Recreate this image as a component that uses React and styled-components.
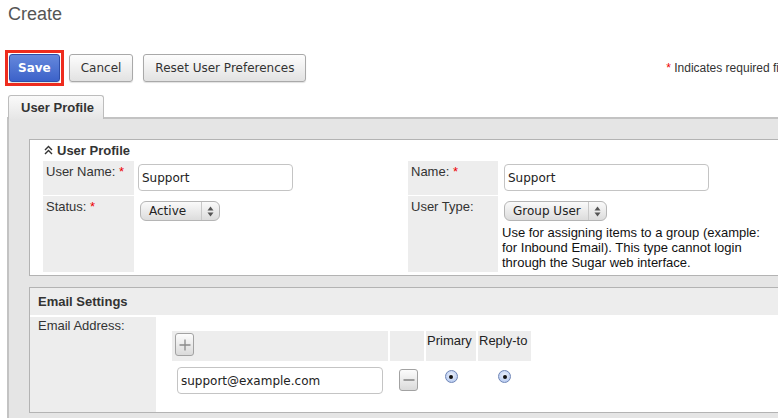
import React from "react";
import styled, { createGlobalStyle } from "styled-components";

const GlobalStyle = createGlobalStyle`
  html, body {
    margin: 0;
    padding: 0;
    background: #fff;
    overflow: hidden;
  }
  body {
    font-family: "Liberation Sans", Arial, sans-serif;
    font-size: 13px;
    color: #333;
  }
`;

const Page = styled.div`
  width: 803px;
  height: 418px;
  overflow: hidden;
`;

const Title = styled.h1`
  margin: 0;
  padding: 4px 0 0 8px;
  height: 50px;
  box-sizing: border-box;
  font-size: 18px;
  font-weight: normal;
  line-height: 20px;
  color: #555;
`;

const ButtonBar = styled.div`
  display: flex;
  align-items: center;
  padding-left: 5px;
`;

const Highlight = styled.div`
  border: 3px solid #ee2c1e;
  padding: 1px;
  margin-right: 5px;
  display: flex;
`;

const Button = styled.button`
  height: 28px;
  padding: 0 ${(p) => (p.$primary ? "8px" : "11px")};
  margin-right: ${(p) => p.$gap || 0}px;
  border-radius: 3px;
  border: 1px solid ${(p) => (p.$primary ? "#2f4fa8" : "#a9a9a9")};
  background: ${(p) =>
    p.$primary
      ? "linear-gradient(#6588dc, #3c62c9)"
      : "linear-gradient(#fdfdfd, #e2e2e2)"};
  color: ${(p) => (p.$primary ? "#fff" : "#333")};
  font-family: "DejaVu Sans", Verdana, sans-serif;
  font-size: 12px;
  font-weight: ${(p) => (p.$primary ? "bold" : "normal")};
  box-shadow: 0 1px 1px rgba(0, 0, 0, 0.12);
`;

const RequiredNote = styled.div`
  margin-left: auto;
  padding-right: 8px;
  font-size: 12px;
  color: #333;
  white-space: nowrap;
`;

const Star = styled.span`
  color: #e00;
`;

const TabBar = styled.div`
  display: flex;
  padding: 9px 0 0 8px;
`;

const Tab = styled.div`
  width: 96px;
  height: 24px;
  box-sizing: border-box;
  padding: 4px 0 0 12px;
  border: 1px solid #bdbdbd;
  border-bottom: none;
  border-radius: 3px 3px 0 0;
  background: linear-gradient(#fafafa, #e6e6e6);
  font-weight: bold;
  color: #333;
  margin-bottom: -2px;
  position: relative;
`;

const TabPanel = styled.div`
  margin-left: 7px;
  border-top: 2px solid #c3c3c3;
  border-left: 2px solid #c3c3c3;
  background: #e5e5e5;
  padding: 20px 0 0 20px;
  height: 300px;
`;

const Section = styled.div`
  background: #fff;
  border: 1px solid #b3b3b3;
  margin-bottom: ${(p) => p.$mb || 0}px;
`;

const SectionHead = styled.div`
  display: flex;
  align-items: center;
  gap: 4px;
  height: 20px;
  padding: 0 0 1px 14px;
  font-weight: bold;
  color: #333;
`;

const ProfileGrid = styled.div`
  display: grid;
  grid-template-columns: 91px 266px 90px 1fr;
  grid-template-rows: 34px 76px;
  column-gap: 4px;
  row-gap: 1px;
  padding: 0 0 3px 13px;
`;

const Label = styled.div`
  background: #ededed;
  padding: 3px 3px;
  color: #333;
  white-space: nowrap;
`;

const Field = styled.div`
  padding-top: ${(p) => p.$top || 3}px;
  padding-left: ${(p) => p.$left || 0}px;
`;

const TextInput = styled.input`
  display: block;
  width: ${(p) => p.$w}px;
  height: 27px;
  box-sizing: border-box;
  border: 1px solid #c4c4c4;
  border-radius: 4px;
  padding: 0 3px;
  font-family: "DejaVu Sans", Verdana, sans-serif;
  font-size: 12px;
  color: #222;
  outline: none;
  background: #fff;
`;

const Select = styled.div`
  display: flex;
  align-items: center;
  width: ${(p) => p.$w}px;
  height: 20px;
  box-sizing: border-box;
  border: 1px solid #b5b5b5;
  border-radius: 6px;
  background: linear-gradient(#fafafa, #dcdcdc);
  font-family: "DejaVu Sans", Verdana, sans-serif;
  font-size: 12px;
  color: #222;
  margin-left: ${(p) => p.$ml || 0}px;
`;

const SelectText = styled.span`
  flex: 1;
  padding-left: 8px;
`;

const SelectArrows = styled.span`
  width: 17px;
  height: 100%;
  border-left: 1px solid #c8c8c8;
  display: flex;
  align-items: center;
  justify-content: center;
`;

const Help = styled.div`
  width: 268px;
  margin-top: 4px;
  line-height: 15px;
  color: #111;
`;

const EmailHead = styled.div`
  height: 27px;
  line-height: 27px;
  background: #ededed;
  padding-left: 8px;
  font-weight: bold;
  color: #333;
`;

const EmailRow = styled.div`
  display: flex;
  margin-top: 2px;
`;

const EmailLabel = styled.div`
  width: 126px;
  min-height: 95px;
  box-sizing: border-box;
  background: #ededed;
  padding: 1px 8px;
  color: #333;
`;

const EmailTable = styled.div`
  display: grid;
  grid-template-columns: 216px 34px 50px 53px;
  grid-template-rows: 30px 36px;
  column-gap: 2px;
  margin: 14px 0 0 16px;
`;

const HeadCell = styled.div`
  background: #ededed;
  padding: ${(p) => (p.$btn ? "2px 0 0 3px" : "2px 0 0 1px")};
  color: #222;
  white-space: nowrap;
`;

const Cell = styled.div`
  display: flex;
  justify-content: ${(p) => (p.$center ? "center" : "flex-start")};
  align-items: flex-start;
  padding: ${(p) => p.$pad || "0"};
`;

const IconButton = styled.span`
  display: flex;
  align-items: center;
  justify-content: center;
  width: 19px;
  height: ${(p) => p.$h}px;
  box-sizing: border-box;
  border: 1px solid #a2a2a2;
  border-radius: 3px;
  background: linear-gradient(#fcfcfc, #dadada);
`;

const Radio = styled.span`
  width: 13px;
  height: 13px;
  box-sizing: border-box;
  border-radius: 50%;
  border: 1px solid #6f86b7;
  background: radial-gradient(circle at 50% 40%, #eef3fd, #a9c0ec);
  display: flex;
  align-items: center;
  justify-content: center;
  &::after {
    content: "";
    width: 4px;
    height: 4px;
    border-radius: 50%;
    background: #111;
  }
`;

const Collapse = () => (
  <svg width="9" height="10" viewBox="0 0 9 10">
    <path d="M1 5 L4.5 1.5 L8 5 M1 9 L4.5 5.5 L8 9" fill="none" stroke="#333" strokeWidth="1.4" />
  </svg>
);

const Arrows = () => (
  <svg width="7" height="11" viewBox="0 0 7 11">
    <path d="M3.5 0.5 L6.5 4.5 L0.5 4.5 Z M3.5 10.5 L6.5 6.5 L0.5 6.5 Z" fill="#555" />
  </svg>
);

const Plus = () => (
  <svg width="12" height="12" viewBox="0 0 12 12">
    <path d="M6 0.5 V11.5 M0.5 6 H11.5" stroke="#8a8a8a" strokeWidth="1.3" />
  </svg>
);

const Minus = () => (
  <svg width="12" height="4" viewBox="0 0 12 4">
    <path d="M0.5 2 H11.5" stroke="#8a8a8a" strokeWidth="1.6" />
  </svg>
);

const Dropdown = ({ w, ml, children }) => (
  <Select $w={w} $ml={ml}>
    <SelectText>{children}</SelectText>
    <SelectArrows>
      <Arrows />
    </SelectArrows>
  </Select>
);

export default function App() {
  return (
    <Page>
      <GlobalStyle />
      <Title>Create</Title>

      <ButtonBar>
        <Highlight>
          <Button $primary>Save</Button>
        </Highlight>
        <Button $gap={10}>Cancel</Button>
        <Button>Reset User Preferences</Button>
        <RequiredNote>
          <Star>*</Star> Indicates required field
        </RequiredNote>
      </ButtonBar>

      <TabBar>
        <Tab>User Profile</Tab>
      </TabBar>

      <TabPanel>
        <Section $mb={11}>
          <SectionHead>
            <Collapse />
            User Profile
          </SectionHead>
          <ProfileGrid>
            <Label>
              User Name: <Star>*</Star>
            </Label>
            <Field>
              <TextInput $w={155} defaultValue="Support" />
            </Field>
            <Label>
              Name: <Star>*</Star>
            </Label>
            <Field $left={2}>
              <TextInput $w={205} defaultValue="Support" />
            </Field>

            <Label>
              Status: <Star>*</Star>
            </Label>
            <Field $top={5}>
              <Dropdown w={80} ml={2}>Active</Dropdown>
            </Field>
            <Label>User Type:</Label>
            <Field $top={5}>
              <Dropdown w={103} ml={2}>Group User</Dropdown>
              <Help>
                Use for assigning items to a group (example: for Inbound Email). This type cannot
                login through the Sugar web interface.
              </Help>
            </Field>
          </ProfileGrid>
        </Section>

        <Section>
          <EmailHead>Email Settings</EmailHead>
          <EmailRow>
            <EmailLabel>Email Address:</EmailLabel>
            <EmailTable>
              <HeadCell $btn>
                <IconButton $h={23}>
                  <Plus />
                </IconButton>
              </HeadCell>
              <HeadCell />
              <HeadCell>Primary</HeadCell>
              <HeadCell>Reply-to</HeadCell>

              <Cell $pad="6px 0 0 5px">
                <TextInput $w={206} defaultValue="support@example.com" />
              </Cell>
              <Cell $pad="8px 0 0 9px">
                <IconButton $h={22}>
                  <Minus />
                </IconButton>
              </Cell>
              <Cell $center $pad="9px 0 0 0">
                <Radio />
              </Cell>
              <Cell $center $pad="9px 0 0 0">
                <Radio />
              </Cell>
            </EmailTable>
          </EmailRow>
        </Section>
      </TabPanel>
    </Page>
  );
}
